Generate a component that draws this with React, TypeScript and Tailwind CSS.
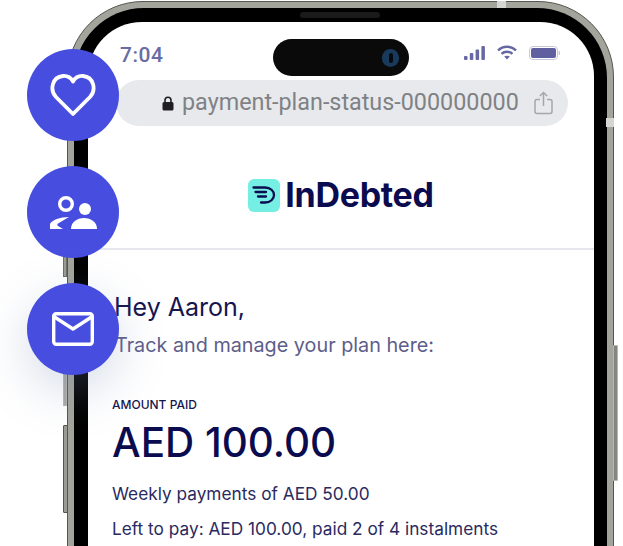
const circleClass = 'w-[92px] h-[92px] rounded-full bg-[#474edf] flex items-center justify-center'

function HeartIcon() {
  return (
    <svg width="46" height="44" viewBox="0 0 46 44" fill="none" stroke="white" strokeWidth="3.8" strokeLinejoin="round">
      <path d="M23 41 L6 24 C-0.5 17 2 4 13 3 C17.5 2.7 21 5 23 8.5 C25 5 28.5 2.7 33 3 C44 4 46.5 17 40 24 Z" />
    </svg>
  )
}

function PeopleIcon() {
  return (
    <svg width="47" height="33" viewBox="0 0 47 33" fill="white">
      <circle cx="16" cy="8" r="6.3" fill="none" stroke="white" strokeWidth="3.4" />
      <circle cx="35" cy="13" r="6" />
      <path d="M0 33 V28 C2 24 10 21 19 21 L8 27.5 C7 28.5 7 29 8 30 L13 33 Z" />
      <path d="M21 33 C21 26 27 22 34 22 C41 22 47 26 47 33 Z" />
    </svg>
  )
}

function MailIcon() {
  return (
    <svg width="42" height="34" viewBox="0 0 42 34" fill="none" stroke="white" strokeWidth="3.4" strokeLinejoin="round">
      <rect x="1.7" y="1.7" width="38.6" height="30.6" rx="2.5" />
      <path d="M2.5 5 L21 17 L39.5 5" />
    </svg>
  )
}

function SignalIcon() {
  return (
    <svg width="21" height="14" viewBox="0 0 21 14" fill="#6767a3">
      <rect x="0" y="10" width="3.5" height="4" rx="1" />
      <rect x="5.8" y="7" width="3.5" height="7" rx="1" />
      <rect x="11.6" y="3.5" width="3.5" height="10.5" rx="1" />
      <rect x="17.4" y="0" width="3.5" height="14" rx="1" />
    </svg>
  )
}

function WifiIcon() {
  return (
    <svg width="20" height="15" viewBox="0 0 20 15" fill="none" stroke="#6767a3" strokeWidth="2.4">
      <path d="M1 5.5 C6 0.5 14 0.5 19 5.5" />
      <path d="M4.5 8.8 C7.5 6 12.5 6 15.5 8.8" />
      <path d="M10 14.5 L7.2 11.6 C8.8 10.4 11.2 10.4 12.8 11.6 Z" fill="#6767a3" stroke="none" />
    </svg>
  )
}

function BatteryIcon() {
  return (
    <svg width="31" height="14" viewBox="0 0 31 14">
      <rect x="0.5" y="0.5" width="28" height="13" rx="3.5" fill="none" stroke="#c9c9dd" />
      <rect x="2" y="2" width="25" height="10" rx="2" fill="#6060a0" />
      <rect x="29.5" y="5" width="1.5" height="4" rx="0.7" fill="#c9c9dd" />
    </svg>
  )
}

function LockIcon() {
  return (
    <svg width="12" height="15" viewBox="0 0 12 15" fill="#1f1f22">
      <path d="M3 6.5 V4.2 C3 2.4 4.3 1.2 6 1.2 C7.7 1.2 9 2.4 9 4.2 V6.5" fill="none" stroke="#1f1f22" strokeWidth="1.6" />
      <rect x="0.5" y="6" width="11" height="8.5" rx="1.5" />
    </svg>
  )
}

function ShareIcon() {
  return (
    <svg width="19" height="24" viewBox="0 0 19 24" fill="none" stroke="#a5a7ab" strokeWidth="1.5">
      <path d="M6 8.5 H3 C1.8 8.5 1 9.3 1 10.5 V20.5 C1 21.7 1.8 22.5 3 22.5 H16 C17.2 22.5 18 21.7 18 20.5 V10.5 C18 9.3 17.2 8.5 16 8.5 H13" />
      <path d="M9.5 15 V1.5 M5.8 5 L9.5 1.5 L13.2 5" />
    </svg>
  )
}

function LogoMark() {
  return (
    <div className="w-[32px] h-[33px] rounded-[6px] bg-[#75eee3] flex items-center justify-center">
      <svg width="24" height="20" viewBox="0 0 24 20" fill="none" stroke="#0b0b4f" strokeWidth="2.3" strokeLinecap="round">
        <path d="M1.5 2.5 H13 C18.5 2.5 22 6 22 10 C22 14 18.5 17.5 13 17.5 H9" />
        <path d="M3.5 7 H14" />
        <path d="M6 11.5 H14" />
      </svg>
    </div>
  )
}

export default function App() {
  return (
    <div className="relative w-[623px] h-[546px] overflow-hidden bg-white" style={{ fontFamily: 'Inter, sans-serif' }}>
      <div className="pt-px pl-[67px]">
        {/* phone frame */}
        <div className="relative w-[547px] h-[640px] rounded-t-[76px] bg-[#a3a49c] border border-[#55564f] p-[6px]">
          <div className="relative h-full rounded-t-[70px] bg-black pt-[14px] pl-[14px] pr-[13px]">
            <div className="absolute left-[226px] top-[4px] w-[80px] h-[6px] rounded-full bg-[#1a1a1a]" />
            <div className="h-full rounded-t-[54px] bg-white">
              {/* status bar */}
              <div className="flex items-start h-[58px] pl-[32px] pr-[34px] pt-[17px]">
                <div className="mt-[4px] w-[153px] text-[21px] leading-[24px] font-medium tracking-[0.5px] text-[#6b6ba3]" style={{ fontFamily: 'Roboto, sans-serif' }}>7:04</div>
                <div className="w-[136px] h-[37px] rounded-[19px] bg-[#0a0a0a] flex items-center justify-end pr-[10px]">
                  <div className="w-[17px] h-[18px] rounded-full bg-[#1a3a5c] flex items-center justify-center">
                    <div className="w-[4px] h-[10px] rounded-full bg-[#050a12]" />
                  </div>
                </div>
                <div className="ml-auto flex items-center gap-[12px] pt-[6px]">
                  <SignalIcon />
                  <WifiIcon />
                  <BatteryIcon />
                </div>
              </div>

              {/* url bar */}
              <div className="ml-[28px] mr-[26px] h-[46px] rounded-full bg-[#e8e9ed] flex items-center pl-[46px]">
                <LockIcon />
                <span className="ml-[8px] text-[23.35px] leading-none text-[#7f8285] whitespace-nowrap" style={{ fontFamily: 'Roboto, sans-serif' }}>payment-plan-status-000000000</span>
                <span className="ml-[15px]"><ShareIcon /></span>
              </div>

              {/* logo */}
              <div className="h-[124px] border-b-2 border-[#e6e6ee] flex items-center justify-center gap-[5px] pt-[16px]">
                <LogoMark />
                <span className="text-[34px] leading-none font-bold tracking-[-0.3px] text-[#0b0b4f]">InDebted</span>
              </div>

              <div className="pl-[24px] pt-[41px]">
                <div className="pl-[2px] text-[25px] leading-[32px] text-[#15154f]">Hey Aaron,</div>
                <div className="pl-[3px] mt-[8px] text-[19.8px] leading-[28px] text-[#5d5d8a] whitespace-nowrap">Track and manage your plan here:</div>
                <div className="mt-[38px] text-[12px] leading-[16px] font-medium text-[#15154f]">AMOUNT PAID</div>
                <div className="mt-[8px] text-[40.4px] leading-[44px] font-medium text-[#0b0b4f]">AED 100.00</div>
                <div className="mt-[17px] text-[17.25px] leading-[24px] text-[#2a2a5e]">Weekly payments of AED 50.00</div>
                <div className="mt-[11px] text-[17.25px] leading-[24px] text-[#2a2a5e] whitespace-nowrap">Left to pay: AED 100.00, paid 2 of 4 instalments</div>
              </div>
            </div>
          </div>
          {/* antenna bands */}
          <div className="absolute left-[429px] -top-px w-[9px] h-[7px] bg-[#d5d6d2]" />
          <div className="absolute -right-px top-[116px] w-[8px] h-[9px] bg-[#d5d6d2]" />
          {/* side buttons */}
          <div className="absolute -left-[5px] top-[253px] w-[4px] h-[22px] bg-[#9a9b93] border border-[#6d6e67]" />
          <div className="absolute -left-[5px] top-[360px] w-[4px] h-[44px] bg-[#a8a9a3] border border-[#b5b6b0]" />
          <div className="absolute -left-[5px] top-[423px] w-[5px] h-[88px] rounded-l-[1px] bg-[#9a9b93] border border-[#55564f]" />
          <div className="absolute -right-[5px] top-[343px] w-[5px] h-[136px] rounded-r-[1px] bg-[#85867f] border border-[#b5b6b0]" />
        </div>
      </div>

      {/* floating action circles */}
      <div className="absolute left-[27px] top-[49px] flex flex-col gap-[25px]">
        <div className={circleClass}><HeartIcon /></div>
        <div className={circleClass}><PeopleIcon /></div>
        <div className={`${circleClass} shadow-[0_16px_48px_rgba(120,140,180,0.3)]`}><MailIcon /></div>
      </div>
    </div>
  )
}
